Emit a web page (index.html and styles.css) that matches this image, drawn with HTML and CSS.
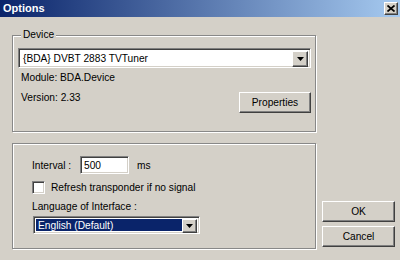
FILE: index.html
```html
<!DOCTYPE html>
<html>
<head>
<meta charset="utf-8">
<link rel="stylesheet" href="styles.css">
</head>
<body>
<div class="window">
  <div class="titlebar">
    <span class="title">Options</span>
    <span class="close raised">
      <svg width="8" height="7" viewBox="0 0 8 7"><path d="M0.5 0.5 L7.5 6.5 M7.5 0.5 L0.5 6.5" stroke="#000" stroke-width="1.7" fill="none"/></svg>
    </span>
  </div>
  <div class="client">
    <div class="left">
      <div class="group device">
        <span class="legend">Device</span>
        <div class="combo sunken">
          <div class="combo-text">{BDA} DVBT 2883 TVTuner</div>
          <div class="drop raised"><svg width="7" height="4" viewBox="0 0 7 4"><polygon points="0,0 7,0 3.5,4" fill="#000"/></svg></div>
        </div>
        <div class="label module">Module: BDA.Device</div>
        <div class="version-row">
          <div class="label">Version: 2.33</div>
          <div class="btn raised props">Properties</div>
        </div>
      </div>
      <div class="group settings">
        <div class="interval-row">
          <span class="interval-label">Interval :</span>
          <div class="field sunken">500</div>
          <span class="unit">ms</span>
        </div>
        <div class="check-row">
          <span class="check sunken"></span>
          <span>Refresh transponder if no signal</span>
        </div>
        <div class="label lang-label">Language of Interface :</div>
        <div class="combo lang sunken">
          <div class="combo-text selected">English (Default)</div>
          <div class="drop raised"><svg width="7" height="4" viewBox="0 0 7 4"><polygon points="0,0 7,0 3.5,4" fill="#000"/></svg></div>
        </div>
      </div>
    </div>
    <div class="right">
      <div class="btn raised action">OK</div>
      <div class="btn raised action">Cancel</div>
    </div>
  </div>
</div>
</body>
</html>
```
FILE: styles.css
```css
html, body {
  margin: 0;
  padding: 0;
}
body {
  background: #d4d0c8;
  font-family: "Liberation Sans", Arial, sans-serif;
  font-size: 10.2px;
  color: #000;
}
.window {
  width: 400px;
  height: 260px;
  background: #d4d0c8;
  overflow: hidden;
}
.titlebar {
  height: 17px;
  background: linear-gradient(to right, #0a246a, #a6caf0);
  display: flex;
  align-items: center;
  justify-content: space-between;
  padding: 0 2px 0 3px;
}
.title {
  color: #fff;
  font-weight: bold;
  font-size: 11px;
  line-height: 13px;
}
.raised {
  background: #d4d0c8;
  border: 1px solid;
  border-color: #fff #404040 #404040 #fff;
  box-shadow: inset -1px -1px 0 #808080;
  box-sizing: border-box;
}
.sunken {
  border: 1px solid;
  border-color: #808080 #fff #fff #808080;
  box-shadow: inset 1px 1px 0 #404040, inset -1px -1px 0 #d4d0c8;
  box-sizing: border-box;
  background: #fff;
}
.close {
  width: 14px;
  height: 13px;
  display: flex;
  align-items: center;
  justify-content: center;
}
.client {
  display: flex;
  padding: 18px 0 0 12px;
}
.left {
  width: 304px;
}
.group {
  position: relative;
  box-sizing: border-box;
  border: 1px solid #888;
  box-shadow: inset 1px 1px 0 #fff, 1px 1px 0 #fff;
}
.legend {
  position: absolute;
  top: -7px;
  left: 8px;
  padding: 0 2px;
  background: #d4d0c8;
  line-height: 12px;
}
.device {
  height: 97px;
  padding: 12px 4px 0 5px;
}
.combo {
  height: 20px;
  display: flex;
  padding: 2px;
}
.combo-text {
  flex: 1;
  line-height: 16px;
  padding-left: 2px;
}
.drop {
  width: 16px;
  height: 16px;
  display: flex;
  align-items: center;
  justify-content: center;
}
.label {
  line-height: 14px;
  padding-left: 3px;
}
.module {
  margin-top: 3px;
}
.version-row {
  margin-top: 6px;
  display: flex;
  justify-content: space-between;
  align-items: flex-start;
}
.btn {
  display: flex;
  align-items: center;
  justify-content: center;
  height: 21px;
}
.props {
  width: 72px;
  margin-top: 1px;
}
.settings {
  margin-top: 11px;
  height: 106px;
  padding: 12px 0 0 19px;
}
.interval-row {
  display: flex;
  align-items: center;
}
.interval-label {
  width: 48px;
}
.field {
  width: 49px;
  height: 18px;
  line-height: 14px;
  padding: 2px 3px;
}
.unit {
  margin-left: 8px;
}
.check-row {
  margin-top: 7px;
  display: flex;
  align-items: center;
  height: 13px;
}
.check {
  width: 13px;
  height: 13px;
  margin-right: 6px;
}
.lang-label {
  margin-top: 6px;
  padding-left: 0;
}
.lang {
  margin-top: 2px;
  margin-left: 1px;
  width: 167px;
  height: 18px;
}
.lang .combo-text {
  line-height: 14px;
}
.lang .drop {
  width: 15px;
  height: 14px;
}
.selected {
  background: #0a246a;
  color: #fff;
}
.right {
  margin-left: 6px;
  display: flex;
  flex-direction: column;
  justify-content: flex-end;
  gap: 4px;
  padding-bottom: 2px;
}
.action {
  width: 73px;
}
```
